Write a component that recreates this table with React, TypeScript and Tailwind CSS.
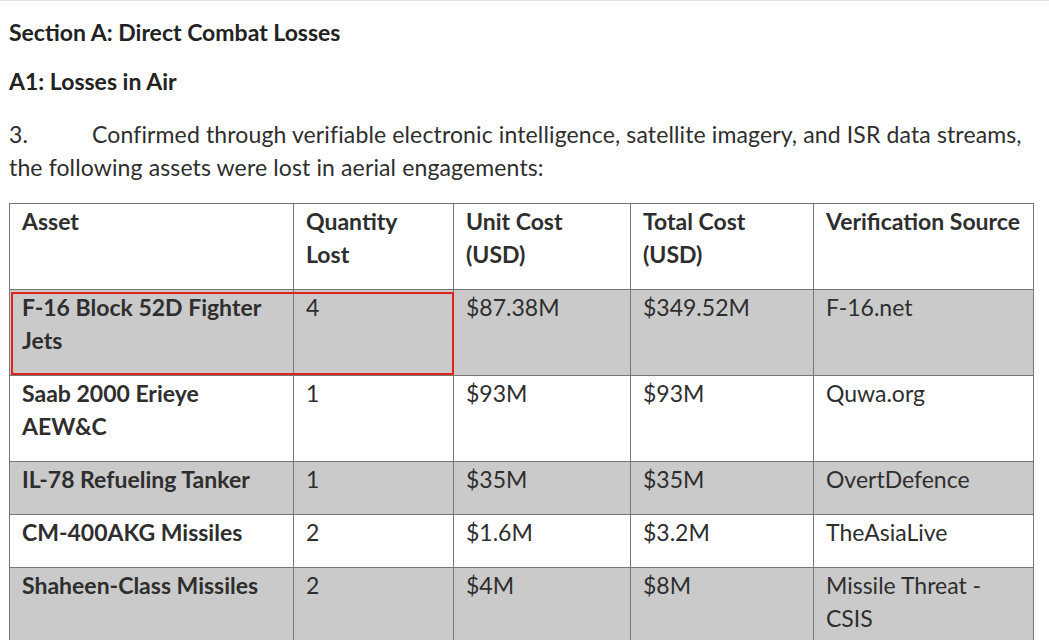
import React from "react";

const rows = [
  { a: ["F-16 Block 52D Fighter", "Jets"], q: "4", u: "$87.38M", t: "$349.52M", v: ["F-16.net"], gray: true, hl: true },
  { a: ["Saab 2000 Erieye", "AEW&C"], q: "1", u: "$93M", t: "$93M", v: ["Quwa.org"], gray: false },
  { a: ["IL-78 Refueling Tanker"], q: "1", u: "$35M", t: "$35M", v: ["OvertDefence"], gray: true },
  { a: ["CM-400AKG Missiles"], q: "2", u: "$1.6M", t: "$3.2M", v: ["TheAsiaLive"], gray: false },
  { a: ["Shaheen-Class Missiles"], q: "2", u: "$4M", t: "$8M", v: ["Missile Threat -", "CSIS"], gray: true },
];

function Lines({ items }: { items: string[] }) {
  return (
    <>
      {items.map((s, i) => (
        <div key={i} className="whitespace-nowrap">{s}</div>
      ))}
    </>
  );
}

export default function App() {
  const cell = "border border-[#777777] align-top pl-[12px] pr-1 pt-[1px] pb-[18px]";
  return (
    <div
      className="w-[1049px] h-[640px] overflow-hidden bg-white border-t border-[#e2e2e2] text-[#2e2e2e]"
      style={{ fontFamily: "Lato, 'Open Sans', sans-serif" }}
    >
      <div className="pl-[9px] text-[23px] leading-[33px]">
        <div className="mt-[15px] font-bold text-[#222]">Section A: Direct Combat Losses</div>
        <div className="mt-[16px] font-bold text-[#222]">A1: Losses in Air</div>
        <div className="mt-[20px] tracking-[0.13px]">
          <div className="flex whitespace-nowrap">
            <span className="w-[83px]">3.</span>
            <span>Confirmed through verifiable electronic intelligence, satellite imagery, and ISR data streams,</span>
          </div>
          <div>the following assets were lost in aerial engagements:</div>
        </div>
        <table className="mt-[19px] border-collapse table-fixed w-[1024px]">
          <colgroup>
            <col className="w-[284px]" />
            <col className="w-[160px]" />
            <col className="w-[177px]" />
            <col className="w-[183px]" />
            <col className="w-[220px]" />
          </colgroup>
          <thead>
            <tr className="font-bold">
              <td className={cell}>Asset</td>
              <td className={cell}><Lines items={["Quantity", "Lost"]} /></td>
              <td className={cell}><Lines items={["Unit Cost", "(USD)"]} /></td>
              <td className={cell}><Lines items={["Total Cost", "(USD)"]} /></td>
              <td className={cell}>Verification Source</td>
            </tr>
          </thead>
          <tbody>
            {rows.map((r, i) => (
              <tr key={i} className={r.gray ? "bg-[#cacaca]" : "bg-white"}>
                <td className={`${cell} font-bold relative`}>
                  <Lines items={r.a} />
                  {r.hl && (
                    <div className="absolute left-[1px] top-[2px] w-[443px] h-[83px] border-2 border-[#e0241c] pointer-events-none" />
                  )}
                </td>
                <td className={cell}>{r.q}</td>
                <td className={cell}>{r.u}</td>
                <td className={cell}>{r.t}</td>
                <td className={cell}><Lines items={r.v} /></td>
              </tr>
            ))}
          </tbody>
        </table>
      </div>
    </div>
  );
}
